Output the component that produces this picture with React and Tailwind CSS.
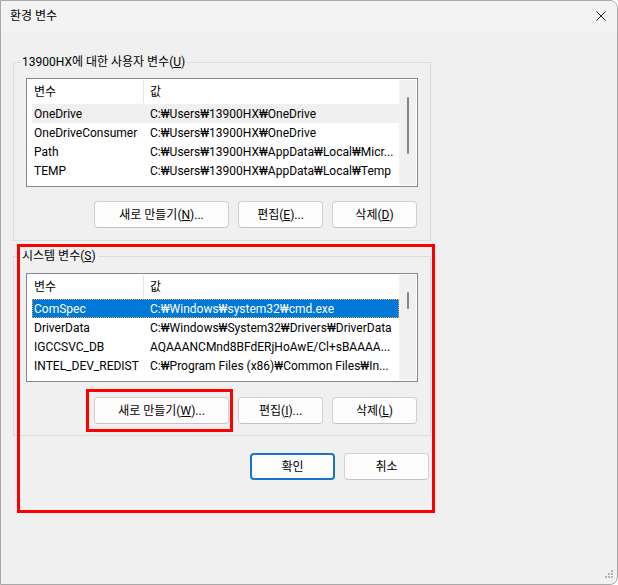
import React from "react";

const userVars = [
    { name: "OneDrive", value: "C:₩Users₩13900HX₩OneDrive" },
    { name: "OneDriveConsumer", value: "C:₩Users₩13900HX₩OneDrive" },
    { name: "Path", value: "C:₩Users₩13900HX₩AppData₩Local₩Micr..." },
    { name: "TEMP", value: "C:₩Users₩13900HX₩AppData₩Local₩Temp" },
];

const systemVars = [
    { name: "ComSpec", value: "C:₩Windows₩system32₩cmd.exe" },
    { name: "DriverData", value: "C:₩Windows₩System32₩Drivers₩DriverData" },
    { name: "IGCCSVC_DB", value: "AQAAANCMnd8BFdERjHoAwE/Cl+sBAAAA..." },
    { name: "INTEL_DEV_REDIST", value: "C:₩Program Files (x86)₩Common Files₩In..." },
];

const ListBox = ({ rows, hoverIndex, selectedIndex, thumbClass }) => {
    return (
        <div className="w-[392px] h-[109px] border border-[#828790] bg-white flex overflow-hidden">
            <div className="w-[372px] pl-[5px] overflow-hidden">
                <div className="flex items-center h-[25px]">
                    <div className="w-[111px] pl-[2px]">변수</div>
                    <div className="w-px h-[23px] bg-[#e5e5e5]"></div>
                    <div className="pl-[6px]">값</div>
                </div>
                {rows.map((row, i) => (
                    <div
                        key={row.name}
                        className={
                            i === selectedIndex
                                ? "flex items-center h-[19px] bg-[#0078d7] text-white outline-1 outline-dotted outline-[#f2a93b] -outline-offset-1"
                                : i === hoverIndex
                                    ? "flex items-center h-[19px] bg-[#f0f0f0]"
                                    : "flex items-center h-[19px]"
                        }
                    >
                        <div className="w-[112px] shrink-0 pl-[2px] whitespace-nowrap overflow-hidden">{row.name}</div>
                        <div className="pl-[6px] whitespace-nowrap overflow-hidden">{row.value}</div>
                    </div>
                ))}
            </div>
            {/* thin scrollbar */}
            <div className="w-[17px] my-[1px] mr-[1px] bg-[#f0f0f0] pt-[17px] pl-[8px]">
                <div className={thumbClass}></div>
            </div>
        </div>
    );
};

const Btn = ({ children, className }) => (
    <button className={"h-[27px] bg-[#fdfdfd] border border-[#d0d0d0] border-b-[#c4c4c4] rounded-[4px] text-[12px] text-black flex items-center justify-center " + className}>
        {children}
    </button>
);

const Group = ({ label, hotkey, rows, hoverIndex, selectedIndex, thumbClass, keys, listTop, btnTop, bottomPad, extraClass }) => (
    <fieldset className={"w-[418px] border border-[#dcdcdc] pl-[6px] " + bottomPad + " " + extraClass}>
        <legend className="px-[2px] leading-[16px]">
            {label}(<span className="underline">{hotkey}</span>)
        </legend>
        <div className="pl-[6px]">
            <div className={listTop}>
                <ListBox rows={rows} hoverIndex={hoverIndex} selectedIndex={selectedIndex} thumbClass={thumbClass} />
            </div>
            <div className={"w-[392px] flex justify-end gap-[9px] pr-[1px] " + btnTop}>
                <Btn className="w-[135px]">새로 만들기(<span className="underline">{keys[0]}</span>)...</Btn>
                <Btn className="w-[85px]">편집(<span className="underline">{keys[1]}</span>)...</Btn>
                <Btn className="w-[85px]">삭제(<span className="underline">{keys[2]}</span>)</Btn>
            </div>
        </div>
    </fieldset>
);

export default function App() {
    return (
        <div className="relative w-[618px] h-[585px] overflow-hidden border border-[#a8a8a8] rounded-tr-[8px] rounded-br-[8px] bg-[#f0f0f0] text-[12px] text-black font-['Roboto','Noto_Sans_CJK_KR',sans-serif]">
            {/* title bar */}
            <div className="h-[30px] bg-[#f3f3f3] flex items-center justify-between pl-[9px] pr-[10px] pb-[1px]">
                <div>환경 변수</div>
                <svg width="10" height="10" viewBox="0 0 10 10" className="mr-[1px]">
                    <path d="M0.5 0.5 L9.5 9.5 M9.5 0.5 L0.5 9.5" stroke="#1b1b1b" strokeWidth="1" fill="none" />
                </svg>
            </div>

            <div className="pl-[12px] pt-[23px]">
                <Group
                    label="13900HX에 대한 사용자 변수"
                    hotkey="U"
                    rows={userVars}
                    hoverIndex={0}
                    selectedIndex={-1}
                    thumbClass="w-[2px] h-[57px] rounded-full bg-[#858585]"
                    keys={["N", "E", "D"]}
                    listTop="mt-[8px]"
                    btnTop="mt-[14px]"
                    bottomPad="pb-[12px]"
                    extraClass=""
                />
                <Group
                    label="시스템 변수"
                    hotkey="S"
                    rows={systemVars}
                    hoverIndex={-1}
                    selectedIndex={0}
                    thumbClass="w-[2px] h-[17px] rounded-full bg-[#858585]"
                    keys={["W", "I", "L"]}
                    listTop="mt-[9px]"
                    btnTop="mt-[15px]"
                    bottomPad="pb-[11px]"
                    extraClass="mt-[7px]"
                />

                <div className="w-[418px] flex justify-end gap-[9px] pr-[2px] mt-[17px]">
                    <Btn className="w-[85px] !border-2 !border-[#1a73cf]">확인</Btn>
                    <Btn className="w-[85px]">취소</Btn>
                </div>
            </div>

            {/* red annotation boxes */}
            <div className="absolute left-[16px] top-[243px] w-[418px] h-[269px] border-[3px] border-[#ff0000]"></div>
            <div className="absolute left-[85px] top-[388px] w-[147px] h-[43px] border-[3px] border-[#ff0000]"></div>

            {/* resize grip */}
            <svg width="12" height="12" viewBox="0 0 12 12" className="absolute right-[2px] bottom-[2px]">
                <rect x="8" y="0" width="2" height="2" fill="#b4b4b4" />
                <rect x="5" y="3" width="2" height="2" fill="#b4b4b4" />
                <rect x="8" y="3" width="2" height="2" fill="#b4b4b4" />
                <rect x="2" y="6" width="2" height="2" fill="#b4b4b4" />
                <rect x="5" y="6" width="2" height="2" fill="#b4b4b4" />
                <rect x="8" y="6" width="2" height="2" fill="#b4b4b4" />
            </svg>
        </div>
    );
}
